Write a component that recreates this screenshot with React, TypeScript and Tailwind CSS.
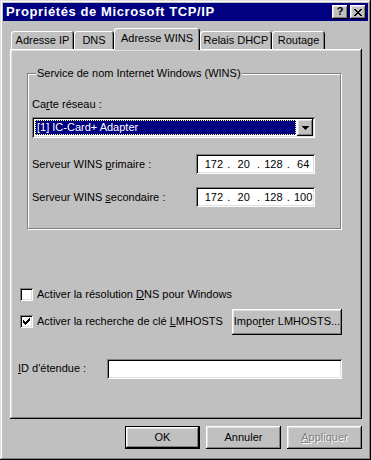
import React from 'react';

const raised =
  'bg-[#c0c0c0] shadow-[inset_-1px_-1px_#000,inset_1px_1px_#fff,inset_-2px_-2px_#808080,inset_2px_2px_#dfdfdf]';
const sunken =
  'bg-white shadow-[inset_1px_1px_#808080,inset_-1px_-1px_#fff,inset_2px_2px_#000,inset_-2px_-2px_#dfdfdf]';

const Tab: React.FC<{ label: string; w: string; active?: boolean }> = ({ label, w, active }) => (
  <div
    className={`${w} flex items-center justify-center rounded-t-[3px] bg-[#c0c0c0] shadow-[inset_1px_1px_#fff,inset_-1px_0_#000,inset_-2px_0_#808080] ${
      active ? 'relative z-10 h-[22px] -mb-[1px] pb-[2px]' : 'h-[18px] pt-[1px]'
    }`}
  >
    {label}
  </div>
);

const IpField: React.FC<{ parts: string[] }> = ({ parts }) => (
  <div className={`${sunken} w-[119px] h-[20px] flex items-center pl-[6px]`}>
    {parts.map((p, i) => (
      <React.Fragment key={i}>
        <span className="w-[24px] text-center">{p}</span>
        {i < 3 && <span className="w-[6px] text-center">.</span>}
      </React.Fragment>
    ))}
  </div>
);

const Checkbox: React.FC<{ checked?: boolean }> = ({ checked }) => (
  <div className={`${sunken} w-[13px] h-[13px] flex items-center justify-center shrink-0`}>
    {checked && (
      <svg width="7" height="7" viewBox="0 0 7 7">
        <path d="M0 2h1v1h1v1h1v-1h1v-1h1v-1h1v-1h1v3h-1v1h-1v1h-1v1h-1v1h-1v-1h-1v-1h-1z" fill="#000" />
      </svg>
    )}
  </div>
);

export default function App() {
  return (
    <div className="w-[371px] h-[460px] bg-[#c0c0c0] p-[3px] flex flex-col text-[11px] text-black font-['Liberation_Sans',Arial,sans-serif] shadow-[inset_-1px_-1px_#000,inset_1px_1px_#dfdfdf,inset_-2px_-2px_#808080,inset_2px_2px_#fff]">
      {/* title bar */}
      <div className="h-[18px] bg-[#000080] flex items-center justify-between pl-[3px] pr-[2px]">
        <span className="text-white font-bold text-[13px] tracking-[0.6px]">Propriétés de Microsoft TCP/IP</span>
        <div className="flex gap-[2px]">
          <div className={`${raised} w-[16px] h-[14px] flex items-center justify-center font-bold text-[11px] leading-none pb-[1px]`}>?</div>
          <div className={`${raised} w-[16px] h-[14px] flex items-center justify-center`}>
            <svg width="8" height="7" viewBox="0 0 8 7">
              <path d="M0 0h2v1h1v1h2v-1h1v-1h2v1h-1v1h-1v1h-1v1h1v1h1v1h1v1h-2v-1h-1v-1h-2v1h-1v1h-2v-1h1v-1h1v-1h1v-1h-1v-1h-1v-1h-1z" fill="#000" />
            </svg>
          </div>
        </div>
      </div>

      {/* tabs */}
      <div className="mt-[7px] ml-[7px] mr-[6px] flex flex-col">
        <div className="flex items-end pl-[1px]">
          <Tab label="Adresse IP" w="w-[63px]" />
          <Tab label="DNS" w="w-[40px]" />
          <Tab label="Adresse WINS" w="w-[86px]" active />
          <Tab label="Relais DHCP" w="w-[72px]" />
          <Tab label="Routage" w="w-[53px]" />
        </div>

        <div className={`${raised} h-[370px] flex flex-col pt-[24px]`}>
          {/* group box */}
          <div className="ml-[17px] mr-[21px] h-[156px] border border-[#808080] shadow-[1px_1px_#fff,inset_1px_1px_#fff] flex flex-col pl-[4px] pr-[25px]">
            <div className="-mt-[8px] ml-[4px] self-start bg-[#c0c0c0] px-[1px] leading-[14px]">
              Service de nom Internet Windows (WINS)
            </div>
            <div className="mt-[17px] leading-[14px]">
              Ca<u>r</u>te réseau :
            </div>
            <div className={`${sunken} mt-[6px] h-[21px] flex items-center p-[2px]`}>
              <div className="flex-1 h-full p-[1px]">
                <div className="h-full bg-[#000080] text-white flex items-center pl-[2px] outline-1 outline-dotted outline-[#ffff80] -outline-offset-1">
                  [1] IC-Card+ Adapter
                </div>
              </div>
              <div className={`${raised} w-[16px] h-[17px] flex items-center justify-center`}>
                <svg width="7" height="4" viewBox="0 0 7 4">
                  <path d="M0 0h7v1h-1v1h-1v1h-1v1h-1v-1h-1v-1h-1v-1h-1z" fill="#000" />
                </svg>
              </div>
            </div>
            <div className="mt-[16px] flex items-center justify-between">
              <span>
                Serveur WINS <u>p</u>rimaire :
              </span>
              <IpField parts={['172', '20', '128', '64']} />
            </div>
            <div className="mt-[13px] flex items-center justify-between">
              <span>
                Serveur WINS <u>s</u>econdaire :
              </span>
              <IpField parts={['172', '20', '128', '100']} />
            </div>
          </div>

          {/* checkboxes */}
          <div className="mt-[57px] ml-[10px] flex items-center gap-[4px]">
            <Checkbox />
            <span>
              Activer la résolution <u>D</u>NS pour Windows
            </span>
          </div>
          <div className="mt-[6px] ml-[10px] mr-[20px] flex items-center">
            <Checkbox checked />
            <span className="ml-[4px]">
              Activer la recherche de clé <u>L</u>MHOSTS
            </span>
            <div className={`${raised} ml-auto w-[110px] h-[26px] flex items-center justify-center`}>
              Impo<u>r</u>ter LMHOSTS...
            </div>
          </div>
          <div className="mt-[24px] ml-[8px] mr-[20px] flex items-center">
            <span>
              <u>I</u>D d'étendue :
            </span>
            <div className={`${sunken} ml-auto w-[235px] h-[20px]`} />
          </div>
        </div>
      </div>

      {/* buttons */}
      <div className="mt-[7px] flex justify-end gap-[6px] mr-[6px]">
        <div className="w-[75px] h-[23px] border border-black">
          <div className={`${raised} w-full h-full flex items-center justify-center`}>OK</div>
        </div>
        <div className={`${raised} w-[75px] h-[23px] flex items-center justify-center`}>Annuler</div>
        <div className={`${raised} w-[75px] h-[23px] flex items-center justify-center text-[#808080] [text-shadow:1px_1px_#fff]`}>
          <span>
            <u>A</u>ppliquer
          </span>
        </div>
      </div>
    </div>
  );
}
